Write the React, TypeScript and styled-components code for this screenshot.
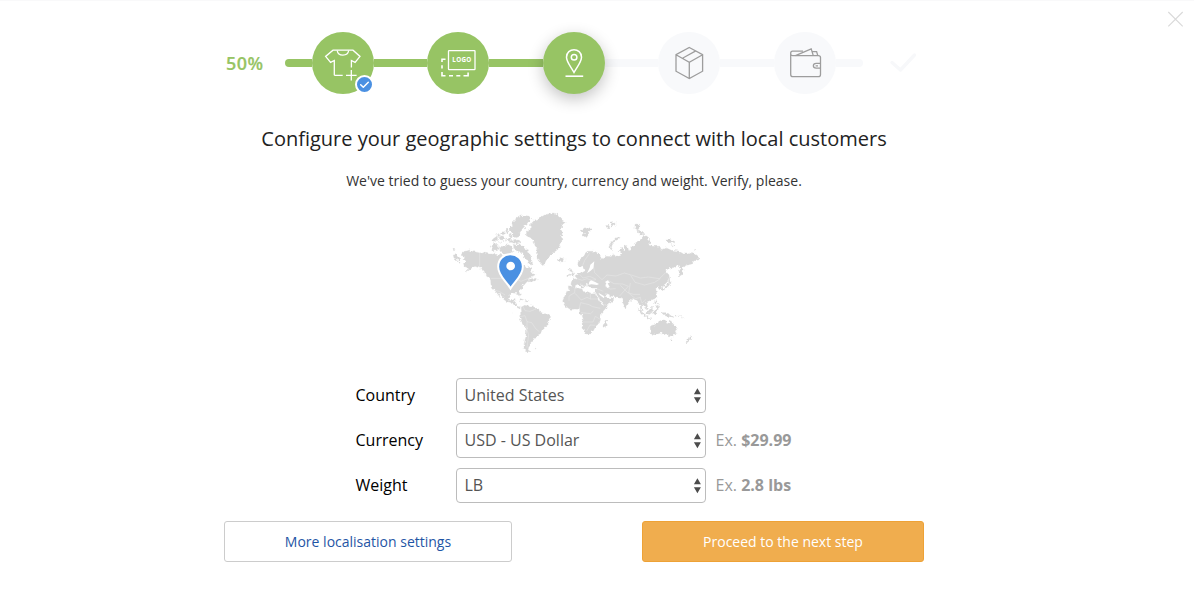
import React from "react";
import styled, { createGlobalStyle, css } from "styled-components";

const GREEN = "#97c464";
const PALE = "#f8f9fb";

const GlobalStyle = createGlobalStyle`
  *, *::before, *::after { box-sizing: border-box; }
  body { margin: 0; background: #fff; font-family: "Open Sans", "Noto Sans", sans-serif; color: #222; }
`;

const Page = styled.div`
  position: relative;
  height: 603px;
  padding-left: 224px;
  border-top: 1px solid #f9f9fa;
  overflow: hidden;
`;

const Content = styled.main`
  width: 700px;
  display: flex;
  flex-direction: column;
  align-items: center;
`;

const CloseButton = styled.button`
  position: absolute;
  top: 10px;
  right: 10px;
  width: 17px;
  height: 17px;
  padding: 0;
  border: 0;
  background: none;
  svg { display: block; }
`;

const Progress = styled.div`
  align-self: stretch;
  height: 62px;
  margin-top: 31px;
  padding-left: 2px;
  display: flex;
  align-items: center;
`;

const Percent = styled.div`
  width: 59px;
  font-size: 18px;
  font-weight: 600;
  line-height: 24px;
  letter-spacing: 0.4px;
  color: ${GREEN};
  -webkit-text-stroke: 0.2px ${GREEN};
`;

const Track = styled.div`
  display: flex;
  align-items: center;
`;

const Segment = styled.div<{ $width: number; $done?: boolean; $end?: "left" | "right" }>`
  width: ${(p) => p.$width}px;
  height: 8px;
  background: ${(p) => (p.$done ? GREEN : PALE)};
  border-radius: ${(p) => (p.$end === "left" ? "4px 0 0 4px" : p.$end === "right" ? "0 4px 4px 0" : "0")};
`;

const Step = styled.div<{ $done?: boolean; $active?: boolean }>`
  position: relative;
  width: 62px;
  height: 62px;
  border-radius: 50%;
  background: ${(p) => (p.$done ? GREEN : PALE)};
  ${(p) => p.$active && css`
    z-index: 1;
    box-shadow: 0 5px 16px rgba(0, 0, 0, 0.24);
  `}
  > svg { display: block; }
`;

const Badge = styled.span`
  position: absolute;
  left: 43px;
  top: 43px;
  width: 19px;
  height: 19px;
  border-radius: 50%;
  border: 2px solid #fff;
  background: #4a90e2;
  svg { display: block; }
`;

const FinalCheck = styled.svg`
  margin-left: 25px;
`;

const Title = styled.h1`
  margin: 31px 0 0;
  font-size: 20px;
  font-weight: 400;
  line-height: 28px;
  color: #222;
  white-space: nowrap;
`;

const Subtitle = styled.p`
  margin: 18px 0 0;
  font-size: 14px;
  line-height: 20px;
  color: #333;
  white-space: nowrap;
`;

const Map = styled.svg`
  display: block;
  margin: 14px 0 0 -3px;
`;

const Form = styled.div`
  align-self: stretch;
  margin-top: 18px;
  padding-left: 131.5px;
  display: flex;
  flex-direction: column;
  gap: 10px;
`;

const Row = styled.div`
  display: flex;
  align-items: center;
  height: 35px;
  font-size: 16px;
`;

const Label = styled.label`
  width: 100.5px;
  padding-bottom: 2px;
  color: #000;
`;

const SelectBox = styled.div`
  display: grid;
  width: 250px;
  height: 35px;
  align-items: center;
  > * { grid-area: 1 / 1; }
  > svg { justify-self: end; margin-right: 4px; pointer-events: none; }
`;

const Select = styled.select`
  appearance: none;
  width: 250px;
  height: 35px;
  padding: 0 24px 2px 7.5px;
  border: 1px solid #bcbcbc;
  border-radius: 4px;
  background: #fff;
  font: 16px "Open Sans", "Noto Sans", sans-serif;
  color: #555;
`;

const Example = styled.span`
  margin-left: 9.5px;
  padding-bottom: 2px;
  color: #999;
`;

const Actions = styled.div`
  align-self: stretch;
  margin-top: 18px;
  display: flex;
  justify-content: space-between;
`;

const Button = styled.button<{ $primary?: boolean }>`
  width: ${(p) => (p.$primary ? 282 : 288)}px;
  height: 41px;
  padding: 0;
  border: 1px solid ${(p) => (p.$primary ? "#eea236" : "#ccc")};
  border-radius: 3px;
  background: ${(p) => (p.$primary ? "#f0ad4e" : "#fff")};
  color: ${(p) => (p.$primary ? "#fff" : "#1f55a5")};
  font: 14px "Open Sans", "Noto Sans", sans-serif;
`;

const Icon = ({ color = "#fff", children }: { color?: string; children: React.ReactNode }) => (
  <svg width="62" height="62" viewBox="0 0 62 62" fill="none" stroke={color} strokeWidth="1.3">
    {children}
  </svg>
);

const ShirtIcon = () => (
  <Icon>
    <path d="M22.3 43.3V28.5L18.6 30.4L13.6 24.4L21 18.2H41L48 24.4L43.1 30.4L39.4 28.5V35.5M22.3 43.3H30.7" />
    <path d="M25.2 18.5C26 24.7 35.7 24.7 36.7 18.5M39.3 38V48.5M34 43.3H44.6" />
  </Icon>
);

const LogoIcon = () => (
  <Icon>
    <rect x="21.5" y="18.7" width="26.5" height="19" rx="0.6" />
    <path d="M18.5 27.3H15V30M15 33.2V36.5M15 40V43.8H18.5M22 43.8H26M29.3 43.8H33.3M36.5 43.8H41.1V40.5" strokeWidth="1.6" />
    <text x="34.9" y="30.3" textAnchor="middle" fontFamily="Open Sans, sans-serif" fontSize="6.3" fontWeight="700" letterSpacing="0.25" fill="#fff" stroke="none">LOGO</text>
  </Icon>
);

const PinIcon = () => (
  <Icon>
    <path d="M31 40.5C28 34.8 23.5 30 23.5 25.2C23.5 15.3 38.5 15.3 38.5 25.2C38.5 30 34 34.8 31 40.5Z" strokeWidth="1.5" />
    <circle cx="31.1" cy="25.2" r="2.8" strokeWidth="1.5" />
    <path d="M22.5 44.2H40.2" strokeWidth="1.6" />
  </Icon>
);

const BoxIcon = () => (
  <Icon color="#9d9d9d">
    <path d="M31.3 15.5L44.6 22.7V39.2L31.3 46.6L18 39.2V22.7ZM18 22.7L31.3 30.2L44.6 22.7M31.3 30.2V46.6M25.3 26.8V25.8L37.8 18.9" />
  </Icon>
);

const WalletIcon = () => (
  <Icon color="#9d9d9d">
    <path d="M16.7 22V21.2C16.7 19.9 17.4 19.2 18.6 19.2H29M16.7 22C16.7 23.2 17.4 23.6 18.6 23.6H44.3C45.8 23.6 46.5 24.3 46.5 25.6V42.4C46.5 44 45.8 44.6 44.3 44.6H19C17.4 44.6 16.7 44 16.7 42.4Z" />
    <path d="M21.5 23.6L37.2 16.9L39.2 23.4M38.5 19.6H42.6L43.8 23.6M46.5 31.4H42.2C38.4 31.4 38.4 36.1 42.2 36.1H46.5M41.6 33.8H44" />
  </Icon>
);

const Arrows = () => (
  <svg width="9" height="16" viewBox="0 0 9 16" fill="#4c4c4c">
    <path d="M4.4 0.3L7.9 6.3H0.9ZM4.4 15.3L7.9 9.2H0.9Z" />
  </svg>
);

const WorldMap = () => (
  <Map width="255" height="155" viewBox="0 0 765 465">
    <defs>
      <filter id="coast" x="0" y="0" width="765" height="465" filterUnits="userSpaceOnUse" colorInterpolationFilters="sRGB">
        <feTurbulence type="fractalNoise" baseFrequency="0.11" numOctaves="2" seed="4" result="noise" />
        <feDisplacementMap in="SourceGraphic" in2="noise" scale="13" xChannelSelector="R" yChannelSelector="G" />
      </filter>
    </defs>
    <g fill="#d7d7d7" stroke="#d7d7d7" strokeWidth="1" strokeLinejoin="round" filter="url(#coast)">
      {/* Americas */}
      <path d="M52 145L58 139L66 138L74 135L84 140L94 141L104 143L112 145L118 142L128 143L134 147L144 148L150 145L158 151L166 148L174 153L190 154L202 151L212 158L208 171L198 180L203 190L217 196L222 207L226 198L224 185L232 177L240 181L246 190L254 187L260 198L268 207L272 212L262 216L248 219L256 223L272 220L277 224L266 228L256 230L252 225L244 232L238 239L233 241L230 250L222 256L223 264L226 272L222 273L217 265L207 264L198 266L191 271L190 281L194 287L203 286L207 281L212 282L208 292L213 299L217 304L226 306L222 310L213 306L205 297L196 292L184 289L176 283L172 275L164 265L158 262L166 276L161 271L152 259L144 251L138 240L137 225L131 218L122 211L118 199L110 190L99 187L90 184L81 188L73 195L60 203L72 192L65 187L58 184L56 176L62 169L54 164L60 158L53 153Z" />
      <path d="M229 307L239 301L254 303L263 303L271 310L281 312L284 321L295 325L307 328L317 335L312 346L308 360L298 366L291 374L286 386L278 390L275 399L267 400L264 409L257 411L257 420L251 426L249 435L255 439L246 440L238 432L237 420L240 405L243 390L245 376L242 365L233 355L225 341L224 329L230 322Z" />
      <path d="M219 283L227 281L237 285L234 288L224 285ZM240 287L251 287L251 290L241 290ZM268 430L273 430L270 433ZM24 132L31 135L26 137ZM25 150L34 149L44 158L42 166L34 162L27 159ZM30 165L48 172L45 175Z" />
      <path d="M195 70L203 63L201 54L208 48L214 39L224 34L239 32L252 34L260 41L251 48L246 56L239 61L238 69L229 75L224 84L220 96L210 98L203 91L206 84L197 80Z" />
      <path d="M136 124L145 116L159 119L160 129L154 138L143 137ZM162 132L166 121L178 122L190 119L201 125L204 138L195 145L178 147L168 142ZM205 118L214 121L226 119L237 127L248 134L253 148L262 157L259 164L264 178L250 174L244 162L237 157L234 143L219 142L207 129ZM182 100L194 101L202 108L219 105L228 111L218 116L196 112ZM163 95L174 93L180 100L172 105L164 102ZM145 101L156 94L158 103L150 110L143 107ZM180 76L187 72L192 78L187 84ZM170 81L177 80L178 87L171 87ZM155 91L161 87L165 91L159 95ZM193 86L201 91L200 98L192 94Z" />
      <path d="M245 80L256 75L257 58L269 45L283 42L290 33L306 28L325 24L338 28L344 37L352 46L361 51L351 61L348 74L353 85L348 94L351 106L343 119L346 127L333 137L321 146L311 153L302 169L296 184L287 176L282 164L276 155L274 140L280 131L270 122L267 108L257 98L244 92Z" />
      <path d="M340 162L350 158L359 164L351 172L342 169Z" />
      {/* Europe and Asia */}
      <path d="M382 245L378 235L383 222L390 226L397 221L391 214L400 208L410 204L419 199L413 184L398 184L400 167L412 158L421 147L432 139L449 139L462 147L469 156L462 160L474 161L483 154L497 155L508 149L522 154L532 149L523 137L528 126L537 137L540 122L549 128L551 141L562 123L575 115L586 104L601 93L613 103L616 114L609 120L623 124L645 124L648 137L664 129L679 136L700 138L716 147L732 147L744 141L760 154L762 167L750 162L740 177L723 181L715 188L712 208L704 213L701 202L708 190L699 181L689 187L671 190L660 199L669 209L672 218L664 234L651 244L657 257L648 256L641 247L632 250L634 261L636 274L629 281L613 287L604 291L608 305L598 307L592 297L590 310L597 326L589 316L584 298L575 288L564 280L551 290L542 309L534 294L529 280L517 275L495 273L480 265L487 277L502 280L507 285L494 296L477 300L467 288L455 267L451 260L455 249L435 249L426 242L431 235L423 238L422 248L416 243L405 233L415 247L410 250L400 237L391 241L390 251L378 256L371 252L370 242Z" />
      <path d="M379 214L382 207L377 195L370 194L378 191L386 207L389 213ZM370 209L375 207L374 214L368 215ZM505 137L492 129L493 120L503 105L516 98L525 97L523 101L511 107L501 120L499 128ZM411 74L420 68L429 73L438 68L439 76L430 79L432 86L424 98L413 91L417 86L408 79ZM480 65L490 61L495 67L487 70ZM496 55L506 53L514 57L504 62ZM570 58L580 57L585 66L578 75L570 69ZM579 75L594 80L597 89L583 87ZM664 106L676 104L690 110L675 114ZM747 134L753 133L751 137ZM679 119L688 121L682 125ZM664 200L672 210L674 228L669 218ZM649 254L659 249L663 240L671 236L671 222L675 230L673 240L664 249L652 258Z" />
      {/* Africa */}
      <path d="M353 288L361 270L367 256L378 253L395 249L411 252L415 260L425 260L437 264L450 263L457 278L465 291L471 300L485 301L482 313L468 329L466 341L463 354L452 364L445 377L436 386L424 387L417 377L411 358L415 342L411 331L405 324L404 313L393 312L378 313L366 309L358 300ZM475 360L482 345L486 350L480 369L474 365Z" />
      {/* Oceania */}
      <path d="M579 310L589 319L602 333L600 336L588 326ZM603 335L613 337L621 341L609 340ZM606 323L613 314L622 305L622 322L613 328L606 327ZM627 319L634 315L632 329L626 326ZM630 285L635 287L632 298L629 294ZM637 302L643 306L638 312L634 307ZM651 323L661 323L674 327L687 337L676 335L663 333L653 327ZM690 330L699 331L692 334ZM602 303L608 309L607 315L600 310Z" />
      <path d="M615 365L629 359L641 350L652 344L663 347L664 355L672 357L674 342L682 354L693 366L695 377L687 392L675 396L665 387L653 383L637 386L624 389L618 382ZM677 402L684 402L680 408ZM734 392L743 397L733 407L722 416L728 405ZM741 400L738 390L744 396Z" />
      <g fill="none" strokeWidth="3" strokeDasharray="4 5 2 4">
        <path d="M147 106L166 91L187 79M152 115L180 108L206 102M480 65L513 58L514 52M483 69L505 67M635 282L640 305M700 331L715 338M741 348L748 355M72 285L78 289M202 321L207 324" />
      </g>
    </g>
    <g fill="none" stroke="#f2f2f2" strokeWidth="1">
      <path d="M104 143V188L119 201M137 220H210L228 229L253 219M146 254L164 260L180 270M234 304L240 317L255 319L273 312M225 335L240 332L246 350L260 353L272 371L283 380M246 350L246 375L251 389L246 428M390 248L389 263L372 273V287M390 265L409 285L426 277L436 282V264M436 282H464M402 313L407 293L432 299L443 305L466 310M408 323L437 326L445 318M412 351H444L451 334L464 342M425 378L435 360L451 361M396 221L411 226L426 221L440 226L453 224M404 208L414 219L434 214L453 223M413 182L419 166L434 145M444 178L449 203L471 224L486 210L513 213L538 204L559 210L586 219L610 216L643 221L662 203M557 211L570 232L599 240L629 232L646 221M489 226L507 236L533 237L550 244L537 258L524 273M480 244L496 252L512 251M453 250L475 259M526 241L548 263L565 268L585 268M556 234L551 264L571 281L587 277M585 277L591 294L603 283M608 324L621 320" />
    </g>
    <path d="M488 226L495 233L488 235L494 246L487 249L481 241L484 235L480 231ZM433 230L438 226L449 230L462 237L456 240L440 238L431 239ZM448 169L445 190L437 197L426 205L434 188L436 179ZM460 263L478 274L477 280L464 270ZM484 265L495 270L491 275Z" fill="#fff" />
    <path d="M196.500 250.500C185 229 159.500 213 159.500 185C159.500 135.500 233.500 135.500 233.500 185C233.500 213 208 229 196.500 250.500Z" fill="#4a90e2" stroke="#fff" strokeWidth="6" />
    <circle cx="197" cy="183" r="13" fill="#fff" />
  </Map>
);

const Field = ({ id, label, value, example }: { id: string; label: string; value: string; example?: string }) => (
  <Row>
    <Label htmlFor={id}>{label}</Label>
    <SelectBox>
      <Select id={id} defaultValue={value}>
        <option>{value}</option>
      </Select>
      <Arrows />
    </SelectBox>
    {example && <Example>Ex. <b>{example}</b></Example>}
  </Row>
);

export default function App() {
  return (
    <>
      <GlobalStyle />
      <Page>
        <CloseButton aria-label="Close">
          <svg width="17" height="17" viewBox="0 0 17 17" stroke="#d9d9d9" strokeWidth="1.1">
            <path d="M1.300 1L15.700 15.300M15.700 1L1.300 15.300" />
          </svg>
        </CloseButton>
        <Content>
          <Progress>
            <Percent>50%</Percent>
            <Track>
              <Segment $width={27} $done $end="left" />
              <Step $done>
                <ShirtIcon />
                <Badge>
                  <svg width="15" height="15" viewBox="0 0 15 15" fill="none" stroke="#fff" strokeWidth="1.5" strokeLinecap="round" strokeLinejoin="round">
                    <path d="M3.7 7.8L6.3 10.2L11.3 5.2" />
                  </svg>
                </Badge>
              </Step>
              <Segment $width={53} $done />
              <Step $done><LogoIcon /></Step>
              <Segment $width={54} $done />
              <Step $done $active><PinIcon /></Step>
              <Segment $width={53} />
              <Step><BoxIcon /></Step>
              <Segment $width={54} />
              <Step><WalletIcon /></Step>
              <Segment $width={27} $end="right" />
            </Track>
            <FinalCheck width="30" height="22" viewBox="0 0 30 22" fill="none" stroke="#f7f8fa" strokeWidth="3.4" strokeLinecap="round" strokeLinejoin="round">
              <path d="M4 10.5L12.5 18L26.500 3" />
            </FinalCheck>
          </Progress>
          <Title>Configure your geographic settings to connect with local customers</Title>
          <Subtitle>We've tried to guess your country, currency and weight. Verify, please.</Subtitle>
          <WorldMap />
          <Form>
            <Field id="country" label="Country" value="United States" />
            <Field id="currency" label="Currency" value="USD - US Dollar" example="$29.99" />
            <Field id="weight" label="Weight" value="LB" example="2.8 lbs" />
          </Form>
          <Actions>
            <Button>More localisation settings</Button>
            <Button $primary>Proceed to the next step</Button>
          </Actions>
        </Content>
      </Page>
    </>
  );
}
